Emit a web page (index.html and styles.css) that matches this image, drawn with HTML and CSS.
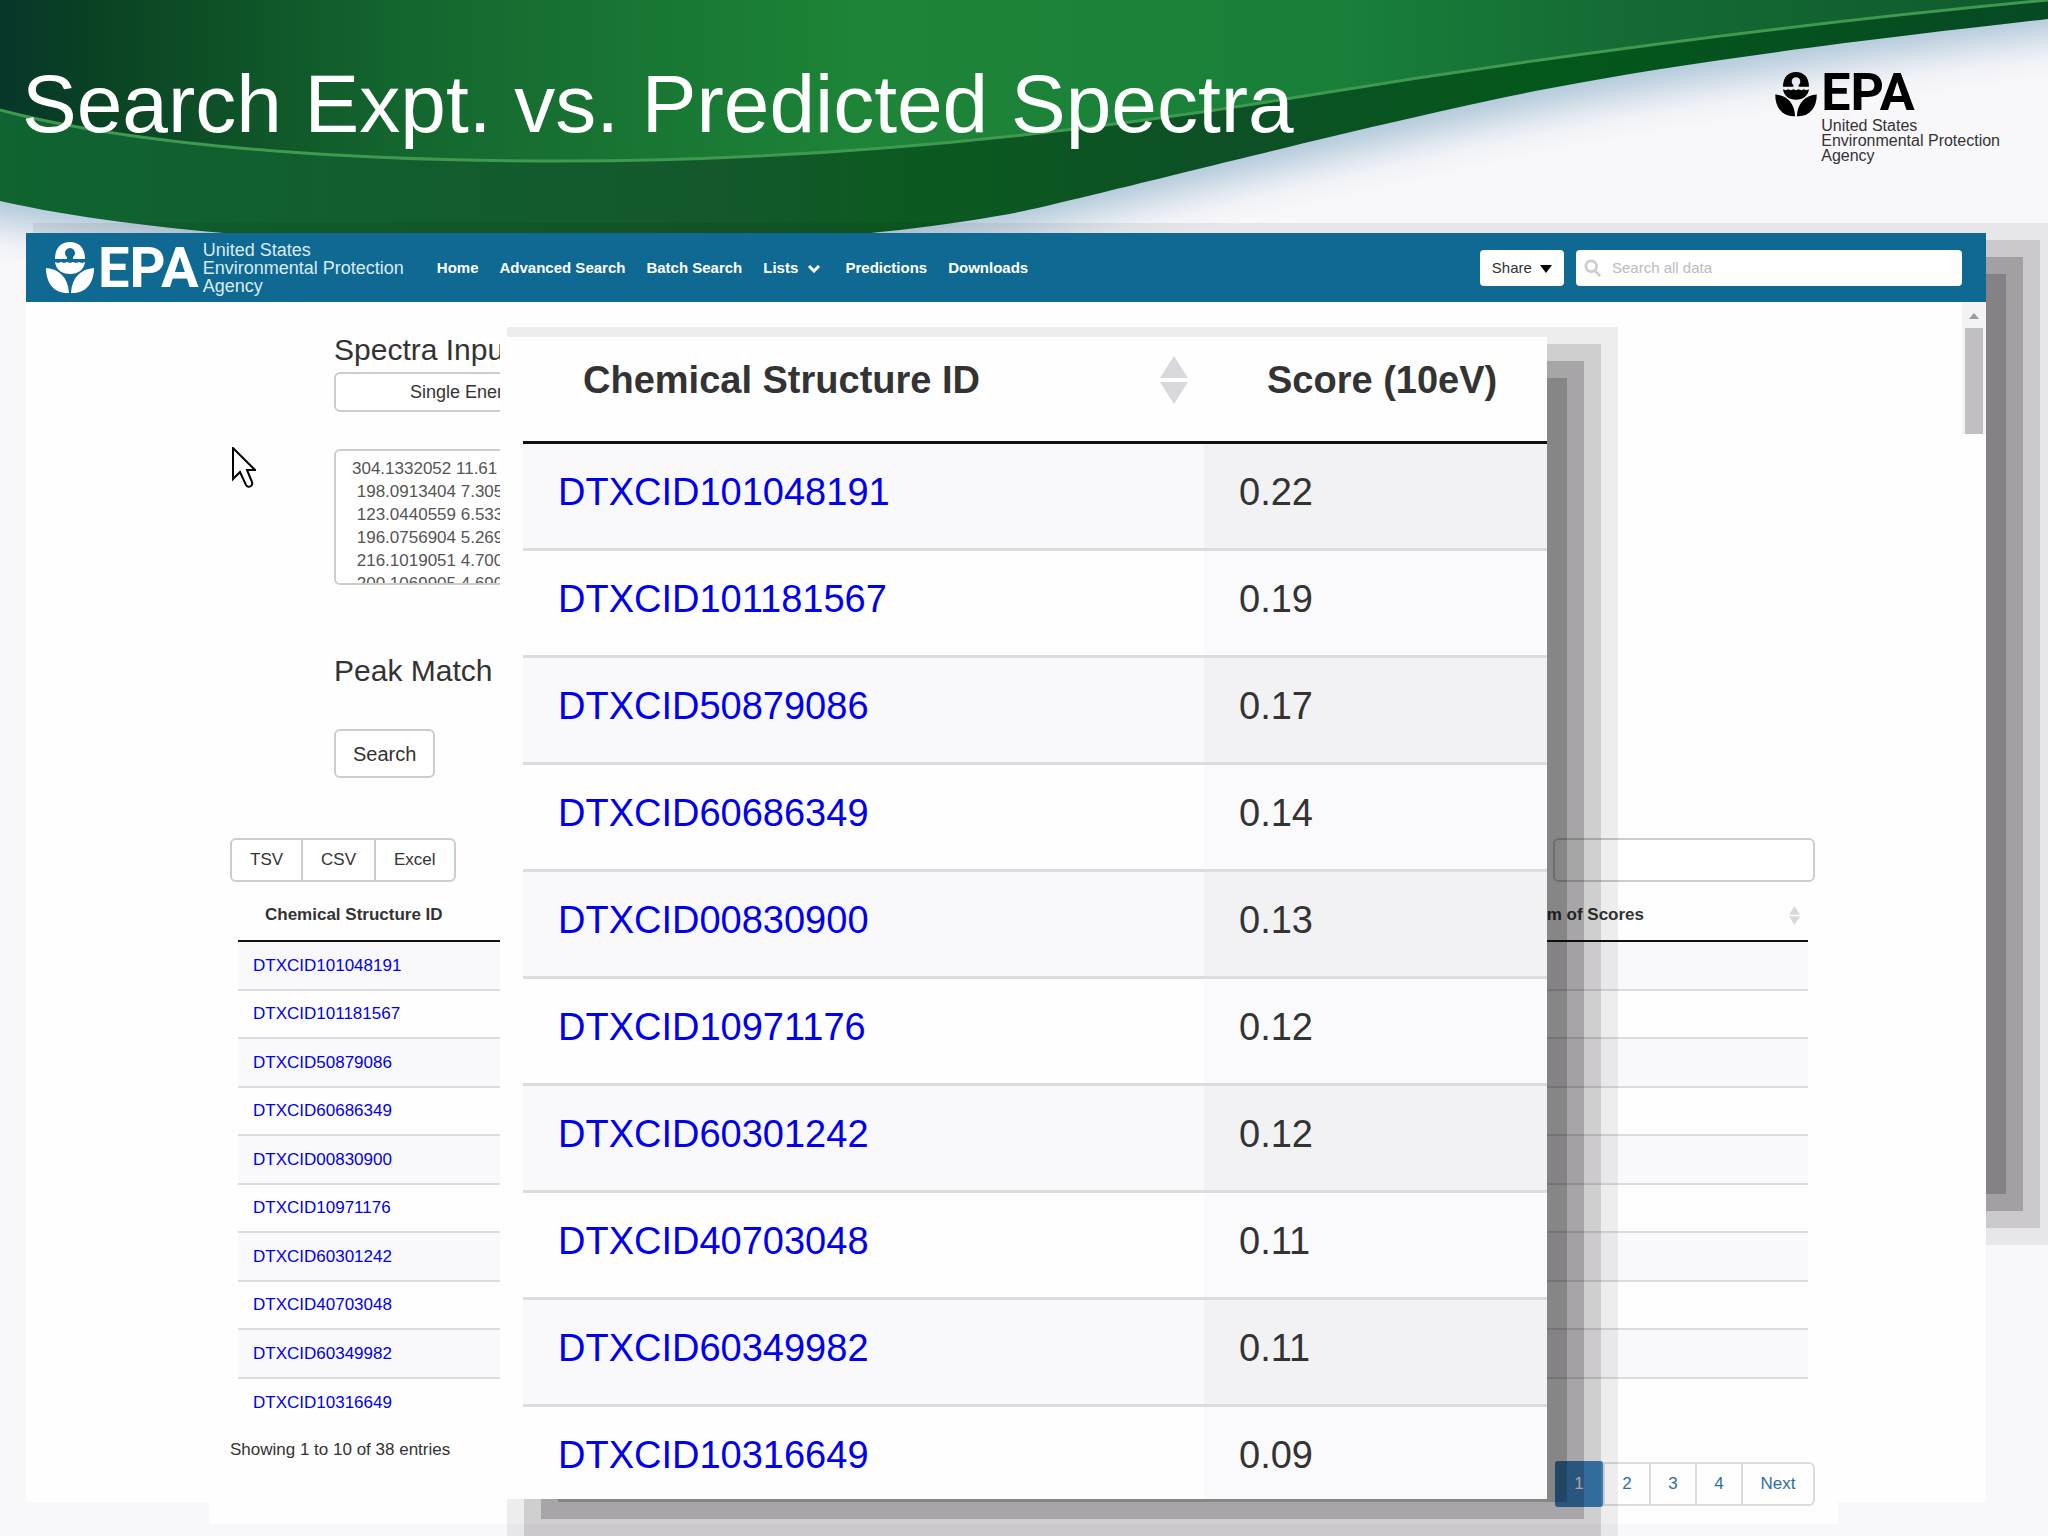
FILE: index.html
```
<!DOCTYPE html>
<html lang="en">
<head>
  <meta charset="UTF-8">
  <meta name="viewport" content="width=device-width, initial-scale=1">
  <title>Search Expt. vs. Predicted Spectra</title>
  <link rel="stylesheet" href="styles.css">
</head>
<body>
  <svg class="symbols" aria-hidden="true">
    <symbol id="flower" viewBox="0 0 48 52">
      <path d="M9 17C9 6 15 0 24 0s15 6 15 17H27v-2a5 5 0 1 0-6 0v2z"/>
      <path d="M9 20l3 1 3-1 3 1 3-1 3 1 3-1 3 1 3-1 3 1 3-1C38 28 32 32 24 32S10 28 9 20z"/>
      <path d="M0 26C13 27 22 35 23 51 9 52 0 42 0 26zM48 26C35 27 26 35 25 51 39 52 48 42 48 26z"/>
    </symbol>
    <symbol id="sort" viewBox="0 0 28 48">
      <path d="M14 0l14 22H0zM14 48L0 26h28z"/>
    </symbol>
  </svg>

  <div class="slide">
    <header class="slide-header">
      <svg class="wave" viewBox="0 0 2048 260" preserveAspectRatio="none" aria-hidden="true">
        <defs>
          <linearGradient id="top">
            <stop offset="0" stop-color="#07362a"/>
            <stop offset="0.05" stop-color="#0a4323"/>
            <stop offset="0.2" stop-color="#14672f"/>
            <stop offset="0.42" stop-color="#1d8438"/>
            <stop offset="0.65" stop-color="#19803a"/>
            <stop offset="0.8" stop-color="#146a34"/>
            <stop offset="1" stop-color="#0f5a2c"/>
          </linearGradient>
          <linearGradient id="band">
            <stop offset="0" stop-color="#0f6430"/>
            <stop offset="0.35" stop-color="#14582c"/>
            <stop offset="0.45" stop-color="#0b5a20"/>
            <stop offset="0.6" stop-color="#0d5026"/>
            <stop offset="0.75" stop-color="#04581b"/>
            <stop offset="1" stop-color="#064a24"/>
          </linearGradient>
          <filter id="haze" x="-5%" y="-20%" width="110%" height="150%">
            <feGaussianBlur stdDeviation="20"/>
          </filter>
        </defs>
        <path filter="url(#haze)" fill="#a9c3d6" d="M-40 214C150 248 380 262 560 262C800 262 950 241 1024 228C1110 210 1390 140 1546 109C1700 78 1900 54 2090 30V-60H-40z"/>
        <path fill="url(#band)" d="M0 201C150 235 380 247 560 247C800 247 950 226 1024 211C1110 192 1390 119 1546 89C1700 59 1900 36 2048 19V0H0z"/>
        <path fill="url(#top)" d="M0 110C150 150 380 161 560 161C800 161 1050 138 1298 97C1500 64 1750 28 2048 0H0z"/>
        <path fill="none" stroke="#3f9a50" stroke-width="3" d="M0 110C150 150 380 161 560 161C800 161 1050 138 1298 97C1500 64 1750 28 2048 0"/>
      </svg>
      <h1 class="slide-title">Search Expt. vs. Predicted Spectra</h1>
      <div class="epa-logo epa-logo-dark">
        <svg class="flower"><use href="#flower"/></svg>
        <div>
          <div class="epa-word">EPA</div>
          <div class="epa-name">United States<br>Environmental Protection<br>Agency</div>
        </div>
      </div>
    </header>

    <main class="app-window">
      <nav class="navbar">
        <a class="epa-logo" href="#">
          <svg class="flower"><use href="#flower"/></svg>
          <span class="epa-word">EPA</span>
          <span class="epa-name">United States<br>Environmental Protection<br>Agency</span>
        </a>
        <div class="nav-links">
          <a href="#">Home</a>
          <a href="#">Advanced Search</a>
          <a href="#">Batch Search</a>
          <a href="#">Lists
            <svg class="chevron" viewBox="0 0 12 8"><path d="M1 1l5 5 5-5"/></svg>
          </a>
          <a href="#">Predictions</a>
          <a href="#">Downloads</a>
        </div>
        <button type="button" class="share-btn">Share
          <svg class="caret" viewBox="0 0 12 8"><path d="M0 0h12L6 8z"/></svg>
        </button>
        <div class="nav-search">
          <svg viewBox="0 0 20 20"><circle cx="8" cy="8" r="6"/><path d="M12 13l6 6"/></svg>
          <input type="text" placeholder="Search all data" aria-label="Search all data">
        </div>
      </nav>

      <div class="content">
        <form class="spectra-form">
          <label class="form-title" for="peaks">Spectra Input</label>
          <button type="button" class="energy-btn">Single Energy</button>
          <textarea id="peaks" class="peaks">304.1332052 11.61
 198.0913404 7.305
 123.0440559 6.533
 196.0756904 5.269
 216.1019051 4.700
 200.1069905 4.690</textarea>
          <h2 class="form-title match-title">Peak Match Tolerance</h2>
          <button type="button" class="search-btn">Search</button>
        </form>

        <section class="results">
          <div class="toolbar">
            <div class="btn-group">
              <button type="button">TSV</button>
              <button type="button">CSV</button>
              <button type="button">Excel</button>
            </div>
            <input type="text" class="filter" aria-label="Filter results">
          </div>

          <table class="results-table">
            <thead>
              <tr>
                <th>Chemical Structure ID</th>
                <th class="sum-col"><div class="th-inner">Sum of Scores <svg class="sort"><use href="#sort"/></svg></div></th>
              </tr>
            </thead>
            <tbody>
              <tr><td><a href="#">DTXCID101048191</a></td><td></td></tr>
              <tr><td><a href="#">DTXCID101181567</a></td><td></td></tr>
              <tr><td><a href="#">DTXCID50879086</a></td><td></td></tr>
              <tr><td><a href="#">DTXCID60686349</a></td><td></td></tr>
              <tr><td><a href="#">DTXCID00830900</a></td><td></td></tr>
              <tr><td><a href="#">DTXCID10971176</a></td><td></td></tr>
              <tr><td><a href="#">DTXCID60301242</a></td><td></td></tr>
              <tr><td><a href="#">DTXCID40703048</a></td><td></td></tr>
              <tr><td><a href="#">DTXCID60349982</a></td><td></td></tr>
              <tr><td><a href="#">DTXCID10316649</a></td><td></td></tr>
            </tbody>
          </table>

          <div class="table-footer">
            <div>Showing 1 to 10 of 38 entries</div>
            <div class="pagination">
              <a class="active" href="#">1</a>
              <a href="#">2</a>
              <a href="#">3</a>
              <a href="#">4</a>
              <a class="next" href="#">Next</a>
            </div>
          </div>
        </section>

        <div class="scrollbar" aria-hidden="true">
          <svg viewBox="0 0 10 6"><path d="M0 6h10L5 0z"/></svg>
          <div class="thumb"></div>
        </div>

        <svg class="cursor" viewBox="0 0 24 41" aria-hidden="true">
          <path d="M1 1v31l7-7 6 13q2 3 5 1 2-2 1-4l-5-12h8z"/>
        </svg>

        <!-- enlarged score table on top of the page -->
        <div class="popup">
          <table class="score-table">
            <thead>
              <tr>
                <th><div class="th-inner">Chemical Structure ID <svg class="sort"><use href="#sort"/></svg></div></th>
                <th class="score-col">Score (10eV)</th>
              </tr>
            </thead>
            <tbody>
              <tr><td><a href="#">DTXCID101048191</a></td><td>0.22</td></tr>
              <tr><td><a href="#">DTXCID101181567</a></td><td>0.19</td></tr>
              <tr><td><a href="#">DTXCID50879086</a></td><td>0.17</td></tr>
              <tr><td><a href="#">DTXCID60686349</a></td><td>0.14</td></tr>
              <tr><td><a href="#">DTXCID00830900</a></td><td>0.13</td></tr>
              <tr><td><a href="#">DTXCID10971176</a></td><td>0.12</td></tr>
              <tr><td><a href="#">DTXCID60301242</a></td><td>0.12</td></tr>
              <tr><td><a href="#">DTXCID40703048</a></td><td>0.11</td></tr>
              <tr><td><a href="#">DTXCID60349982</a></td><td>0.11</td></tr>
              <tr><td><a href="#">DTXCID10316649</a></td><td>0.09</td></tr>
            </tbody>
          </table>
        </div>
      </div>
    </main>
  </div>
</body>
</html>
```
FILE: styles.css
```
* {
  box-sizing: border-box;
}
body {
  margin: 0;
  background: #f8f7fa;
  color: #333;
  font-family: "Liberation Sans", Arial, sans-serif;
  font-size: 17px;
  line-height: 22px;
}
button, input, textarea {
  font: inherit;
  color: inherit;
}
a {
  text-decoration: none;
}
.symbols {
  display: none;
}
.slide {
  min-height: 100vh;
  overflow: hidden;
}

/* slide header */
.slide-header {
  position: relative;
  display: flex;
  justify-content: space-between;
  align-items: flex-start;
  height: 233px;
  padding: 56px 48px 0 22px;
}
.wave {
  position: absolute;
  left: 0;
  top: 0;
  width: 100%;
  height: 260px;
}
.slide-title {
  position: relative;
  margin: 0;
  color: #fff;
  font-size: 82px;
  font-weight: 400;
  line-height: 96px;
}
.epa-logo {
  display: flex;
  align-items: center;
  gap: 4px;
  color: #fff;
}
.flower {
  width: 48px;
  height: 52px;
  fill: currentColor;
}
.epa-word {
  font-family: "Liberation Sans Narrow", Roboto, "Liberation Sans", sans-serif;
  font-size: 56px;
  font-weight: 700;
  line-height: 52px;
}
.epa-name {
  font-size: 18px;
  line-height: 18px;
}
.epa-logo-dark {
  position: relative;
  align-items: flex-start;
  color: #000;
  padding-top: 12px;
}
.epa-logo-dark .flower {
  width: 42px;
  height: 45px;
  margin-top: 4px;
}
.epa-logo-dark .epa-word {
  font-size: 52px;
  line-height: 50px;
}
.epa-logo-dark .epa-name {
  color: #333;
  font-size: 16px;
  line-height: 15px;
}

/* app window, the stepped shadow only follows its upper part */
.app-window {
  position: relative;
  z-index: 1;
  margin: 0 62px 0 26px;
}
.app-window::before {
  content: "";
  position: absolute;
  z-index: -1;
  inset: 0 0 333px 0;
}
.app-window::before, .popup {
  box-shadow:
    39px 22px 0 -19px rgba(12, 10, 12, 0.2),
    39px 22px 0 -2px rgba(12, 10, 12, 0.21),
    39px 22px 0 15px rgba(12, 10, 12, 0.13),
    39px 22px 0 32px rgba(12, 10, 12, 0.07);
}
.navbar {
  display: flex;
  align-items: center;
  height: 69px;
  padding: 0 24px 0 20px;
  background: #0f6993;
  color: #fff;
  font-size: 15px;
}
.navbar .epa-name {
  color: #d9ecf5;
}
.nav-links {
  display: flex;
  flex: 1;
  gap: 21px;
  margin-left: 33px;
}
.nav-links a {
  color: #fff;
  font-weight: 700;
}
.chevron {
  width: 12px;
  height: 8px;
  margin: 0 4px 0 6px;
  fill: none;
  stroke: #fff;
  stroke-width: 3;
}
.share-btn {
  height: 36px;
  margin-right: 12px;
  padding: 0 12px;
  border: 0;
  border-radius: 4px;
  background: #fff;
  color: #333;
}
.caret {
  width: 12px;
  height: 8px;
  margin-left: 4px;
}
.nav-search {
  display: flex;
  align-items: center;
  gap: 10px;
  width: 386px;
  height: 36px;
  padding: 0 8px;
  border-radius: 4px;
  background: #fff;
  color: #333;
}
.nav-search svg {
  width: 18px;
  height: 20px;
  fill: none;
  stroke: #ccc;
  stroke-width: 3;
}
.nav-search input {
  flex: 1;
  min-width: 0;
  padding: 0;
  border: 0;
  outline: 0;
}
.nav-search input::placeholder {
  color: #bbb;
}

.content {
  position: relative;
  padding: 30px 171px 18px 204px;
  background:
    linear-gradient(#fefefe, #fefefe) 0 0 / 100% calc(100% - 22px) no-repeat,
    linear-gradient(#fefefe, #fefefe) 183px 0 / calc(100% - 331px) 100% no-repeat;
}

/* spectra form */
.spectra-form {
  display: flex;
  flex-direction: column;
  align-items: flex-start;
  margin-left: 104px;
}
.form-title {
  margin: 0;
  font-size: 30px;
  font-weight: 400;
  line-height: 36px;
}
.energy-btn, .search-btn, .btn-group, .filter, .peaks {
  border: 2px solid #ccc;
  border-radius: 6px;
  background: #fff;
}
.energy-btn {
  height: 40px;
  width: 264px;
  margin-top: 4px;
  font-size: 18px;
}
.peaks {
  width: 264px;
  height: 136px;
  margin-top: 37px;
  padding: 6px 16px;
  line-height: 23px;
  color: #555;
  overflow: hidden;
  resize: none;
}
.match-title {
  margin-top: 68px;
}
.search-btn {
  height: 49px;
  margin-top: 40px;
  padding: 0 17px;
  font-size: 20px;
}

/* results */
.results {
  margin-top: 60px;
}
.toolbar, .table-footer {
  display: flex;
  justify-content: space-between;
}
.btn-group {
  display: flex;
  height: 44px;
}
.btn-group button {
  padding: 0 18px;
  border: 0;
  border-left: 2px solid #ccc;
  background: none;
}
.btn-group button:first-child {
  border-left: 0;
}
.filter {
  width: 262px;
  height: 44px;
}
.results-table {
  width: calc(100% - 15px);
  margin-left: 8px;
  border-spacing: 0;
}
.results-table th {
  padding: 22px 8px 14px 27px;
  border-bottom: 2px solid #111;
  text-align: left;
}
.results-table .sum-col {
  width: 310px;
}
.th-inner {
  display: flex;
  align-items: center;
  justify-content: space-between;
}
.sort {
  width: 11px;
  height: 19px;
  fill: #d9d8dc;
}
.results-table td {
  height: 49px;
  padding: 0 15px;
  border-bottom: 2px solid #dcdbde;
}
.results-table tr:nth-child(even) td {
  height: 48px;
}
.results-table tr:nth-child(odd) td {
  background: #f9f8fb;
}
.results-table tbody tr:last-child td {
  border-bottom: 0;
}
td a {
  color: #00e;
}
.table-footer {
  padding-top: 12px;
}
.pagination {
  display: flex;
  height: 44px;
  margin-top: 23px;
  border: 2px solid #dcdbde;
  border-left: 0;
  border-radius: 0 6px 6px 0;
}
.pagination a {
  width: 46px;
  border-left: 2px solid #dcdbde;
  color: #2f6ca8;
  line-height: 40px;
  text-align: center;
}
.pagination .active {
  width: 48px;
  margin: -3px 0;
  border: 0;
  border-radius: 3px;
  background: #3a82c0;
  color: #fff;
  line-height: 46px;
}
.pagination .next {
  width: 72px;
}

.scrollbar {
  position: absolute;
  top: 0;
  right: 0;
  display: flex;
  flex-direction: column;
  align-items: center;
  width: 24px;
  height: 132px;
  background: #f3f2f5;
}
.scrollbar svg {
  width: 10px;
  height: 6px;
  margin: 11px 0 9px;
  fill: #9a999c;
}
.thumb {
  flex: 1;
  width: 18px;
  background: #c1bfc3;
}
.cursor {
  position: absolute;
  left: 206px;
  top: 145px;
  width: 24px;
  height: 41px;
  fill: #fff;
  stroke: #000;
  stroke-width: 2;
}

/* popup */
.popup {
  position: absolute;
  top: 35px;
  left: 474px;
  right: 439px;
  padding-left: 23px;
  background: #fefefe;
  font-size: 38px;
  line-height: 44px;
}
.score-table {
  width: 100%;
  border-spacing: 0;
}
.score-table th {
  padding: 21px 16px 39px 60px;
  border-bottom: 3px solid #111;
  text-align: left;
}
.score-table .score-col {
  width: 343px;
  padding-right: 0;
  padding-left: 63px;
}
.score-table .sort {
  width: 28px;
  height: 48px;
  margin: -2px 0;
}
.score-table td {
  padding: 26px 35px 34px;
  border-bottom: 3px solid #dcdbde;
}
.score-table td + td {
  background: #fafafc;
}
.score-table tr:nth-child(odd) td {
  background: #f9f8fb;
}
.score-table tr:nth-child(odd) td + td {
  background: #f2f1f3;
}
.score-table tbody tr:last-child td {
  padding-bottom: 22px;
  border-bottom: 0;
}
```
